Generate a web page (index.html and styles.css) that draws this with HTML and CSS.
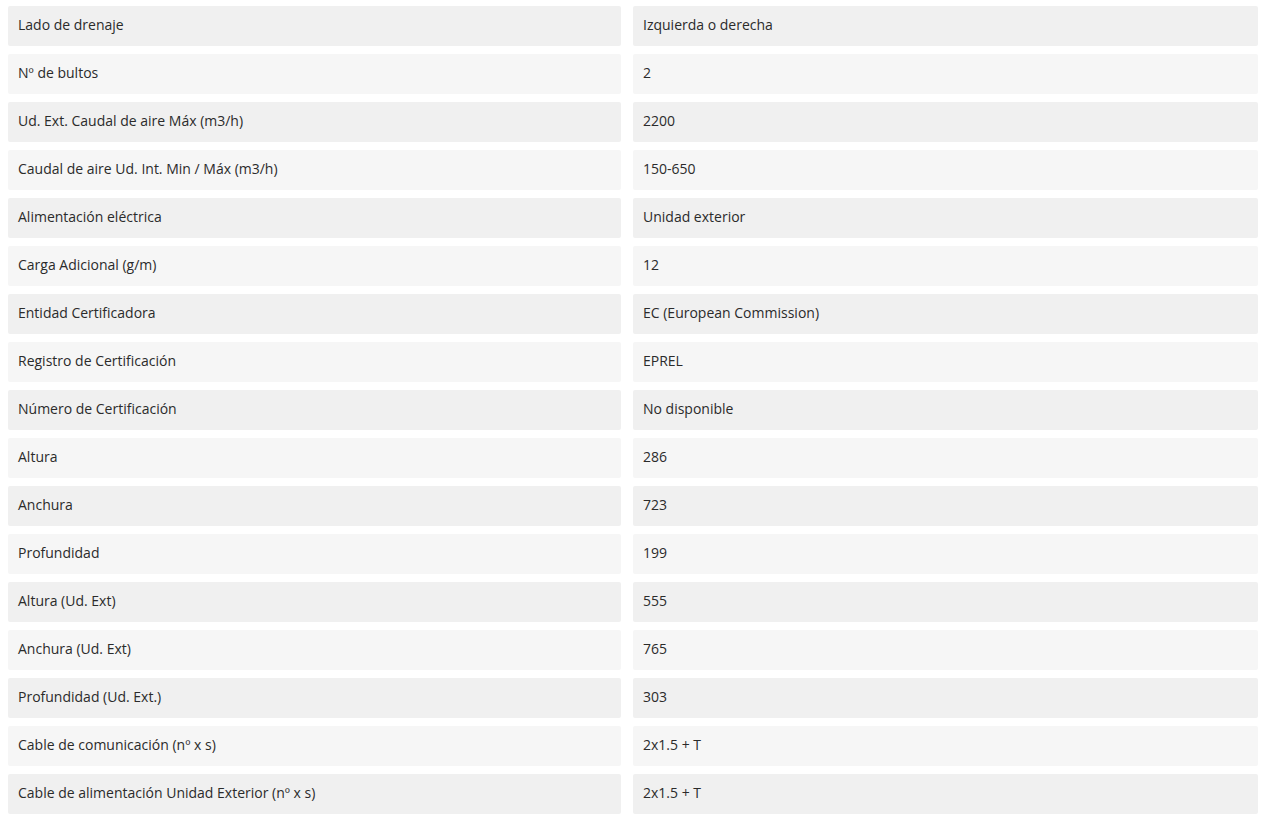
FILE: index.html
```html
<!DOCTYPE html>
<html lang="es">
<head>
<meta charset="utf-8">
<title>Especificaciones</title>
<link rel="stylesheet" href="styles.css">
</head>
<body>
<div class="specs">
  <div class="row odd"><div class="cell">Lado de drenaje</div><div class="cell">Izquierda o derecha</div></div>
  <div class="row even"><div class="cell">Nº de bultos</div><div class="cell">2</div></div>
  <div class="row odd"><div class="cell">Ud. Ext. Caudal de aire Máx (m3/h)</div><div class="cell">2200</div></div>
  <div class="row even"><div class="cell">Caudal de aire Ud. Int. Min / Máx (m3/h)</div><div class="cell">150-650</div></div>
  <div class="row odd"><div class="cell">Alimentación eléctrica</div><div class="cell">Unidad exterior</div></div>
  <div class="row even"><div class="cell">Carga Adicional (g/m)</div><div class="cell">12</div></div>
  <div class="row odd"><div class="cell">Entidad Certificadora</div><div class="cell">EC (European Commission)</div></div>
  <div class="row even"><div class="cell">Registro de Certificación</div><div class="cell">EPREL</div></div>
  <div class="row odd"><div class="cell">Número de Certificación</div><div class="cell">No disponible</div></div>
  <div class="row even"><div class="cell">Altura</div><div class="cell">286</div></div>
  <div class="row odd"><div class="cell">Anchura</div><div class="cell">723</div></div>
  <div class="row even"><div class="cell">Profundidad</div><div class="cell">199</div></div>
  <div class="row odd"><div class="cell">Altura (Ud. Ext)</div><div class="cell">555</div></div>
  <div class="row even"><div class="cell">Anchura (Ud. Ext)</div><div class="cell">765</div></div>
  <div class="row odd"><div class="cell">Profundidad (Ud. Ext.)</div><div class="cell">303</div></div>
  <div class="row even"><div class="cell">Cable de comunicación (nº x s)</div><div class="cell">2x1.5 + T</div></div>
  <div class="row odd"><div class="cell">Cable de alimentación Unidad Exterior (nº x s)</div><div class="cell">2x1.5 + T</div></div>
</div>
</body>
</html>
```
FILE: styles.css
```css
html, body {
  margin: 0;
  padding: 0;
  background: #ffffff;
}
body {
  font-family: "Open Sans", "Liberation Sans", sans-serif;
  font-size: 14px;
  color: #2b2b2b;
}
.specs {
  display: flex;
  flex-direction: column;
  gap: 8px;
  padding: 6px 0 0 8px;
}
.row {
  display: grid;
  grid-template-columns: 613px 625px;
  column-gap: 12px;
}
.cell {
  height: 40px;
  display: flex;
  align-items: center;
  padding: 0 10px 3px;
  box-sizing: border-box;
  border-radius: 2px;
}
.odd .cell {
  background: #f0f0f0;
}
.even .cell {
  background: #f6f6f6;
}
```
